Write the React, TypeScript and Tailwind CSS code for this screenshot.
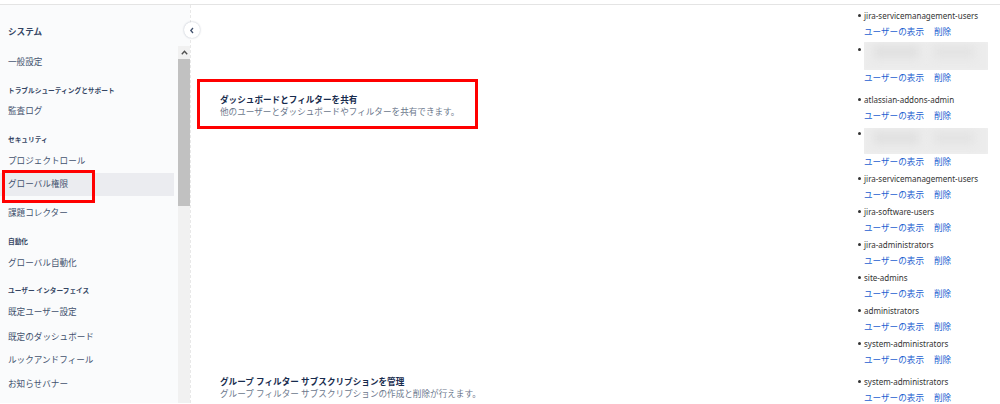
const font = "font-['Noto_Sans','Noto_Sans_CJK_JP',sans-serif]";

type NavRow = { label: string; kind: "title" | "header" | "item"; cls: string; selected?: boolean };

const nav: NavRow[] = [
  { label: "システム", kind: "title", cls: "mt-[15px] h-6" },
  { label: "一般設定", kind: "item", cls: "mt-[6px] h-6" },
  { label: "トラブルシューティングとサポート", kind: "header", cls: "mt-[8px] h-[18px]" },
  { label: "監査ログ", kind: "item", cls: "h-[22px]" },
  { label: "セキュリティ", kind: "header", cls: "mt-[9px] h-[18px]" },
  { label: "プロジェクトロール", kind: "item", cls: "h-6" },
  { label: "グローバル権限", kind: "item", cls: "h-[23px]", selected: true },
  { label: "課題コレクター", kind: "item", cls: "mt-[5px] h-6" },
  { label: "自動化", kind: "header", cls: "mt-[8px] h-[18px]" },
  { label: "グローバル自動化", kind: "item", cls: "h-6" },
  { label: "ユーザー インターフェイス", kind: "header", cls: "mt-[7px] h-[18px]" },
  { label: "既定ユーザー設定", kind: "item", cls: "h-[25px]" },
  { label: "既定のダッシュボード", kind: "item", cls: "h-6" },
  { label: "ルックアンドフィール", kind: "item", cls: "h-[23px]" },
  { label: "お知らせバナー", kind: "item", cls: "h-6" },
];

type Group = { name?: string; top?: string; gapAfter?: string };

const groups: Group[] = [
  { name: "jira-servicemanagement-users" },
  { top: "mt-[2px] h-[28px]", gapAfter: "mb-[5px]" },
  { name: "atlassian-addons-admin" },
  { top: "mt-[4px] h-[26px]" },
  { name: "jira-servicemanagement-users" },
  { name: "jira-software-users" },
  { name: "jira-administrators" },
  { name: "site-admins" },
  { name: "administrators" },
  { name: "system-administrators", gapAfter: "mb-[5px]" },
  { name: "system-administrators" },
];

function Links() {
  return (
    <div className="flex h-4 items-center gap-[10px] pl-[9px] text-[8.6px] text-[#1d5fd1]">
      <span>ユーザーの表示</span>
      <span>削除</span>
    </div>
  );
}

function Sidebar() {
  return (
    <div className="flex w-[190px] shrink-0 bg-[#fafbfc]">
      <div className="flex w-[178px] flex-col">
        {nav.map((r, i) => (
          <div
            key={i}
            className={`relative flex items-center pl-2 ${r.cls} ${
              r.selected ? "mr-[4px] bg-[#ebecf0]" : ""
            } ${
              r.kind === "title"
                ? "text-[8.6px] font-bold text-[#344563]"
                : r.kind === "header"
                ? "text-[6.7px] font-bold text-[#344563]"
                : "text-[8.6px] text-[#42526e]"
            }`}
          >
            {r.label}
            {r.selected && (
              <div className="absolute left-[2px] top-[-3px] h-[33px] w-[93px] border-[3px] border-[#ff0000]" />
            )}
          </div>
        ))}
      </div>
      <div className="flex w-[12px] flex-col pt-[41px]">
        <div className="flex h-[13px] items-center justify-center bg-[#f1f1f1]">
          <svg width="7" height="5" viewBox="0 0 7 5">
            <path d="M0.8 4.2 L3.5 1.3 L6.2 4.2" fill="none" stroke="#505050" strokeWidth="1.4" />
          </svg>
        </div>
        <div className="h-[147px] bg-[#c1c1c1]" />
        <div className="flex-1 bg-[#f1f1f1]" />
      </div>
    </div>
  );
}

export default function App() {
  return (
    <div className={`h-[404px] w-[1000px] overflow-hidden bg-white ${font}`}>
      <div className="h-[5px] border-b border-[#e4e4e4]" />
      <div className="relative flex h-[398px]">
        <Sidebar />
        <button className="absolute left-[184px] top-[17px] flex h-4 w-4 items-center justify-center rounded-full bg-white shadow-[0_0_2px_rgba(9,30,66,0.3)]">
          <svg width="6" height="7" viewBox="0 0 6 7">
            <path d="M4 1 L1.8 3.5 L4 6" fill="none" stroke="#42526e" strokeWidth="1.3" />
          </svg>
        </button>
        <main className="flex flex-1 border-l border-dashed border-[#e8e8e8]">
          <div className="flex flex-1 flex-col pt-[74px]">
            <div className="ml-[6px] w-[281px] border-[3px] border-[#ff0000] pb-[8px] pl-[20px] pt-[12px]">
              <div className="h-3 text-[8.6px] font-bold leading-3 text-[#172b4d]">
                ダッシュボードとフィルターを共有
              </div>
              <div className="h-3 text-[8.6px] leading-3 text-[#6b778c]">
                他のユーザーとダッシュボードやフィルターを共有できます。
              </div>
            </div>
            <div className="mt-auto pb-[3px] pl-[29px]">
              <div className="h-3 text-[8.6px] font-bold leading-3 text-[#172b4d]">
                グループ フィルター サブスクリプションを管理
              </div>
              <div className="h-3 text-[8.6px] leading-3 text-[#6b778c]">
                グループ フィルター サブスクリプションの作成と削除が行えます。
              </div>
            </div>
          </div>
          <div className="flex w-[145px] shrink-0 flex-col pt-[2px]">
            {groups.map((g, i) => (
              <div key={i} className={g.gapAfter ?? ""}>
                {g.name ? (
                  <div className="flex h-[17px] items-center text-[8px] text-[#333]">
                    <span className="mx-[3px] h-[3px] w-[3px] rounded-full bg-[#333]" />
                    {g.name}
                  </div>
                ) : (
                  <div className="flex h-[30px] items-start">
                    <span className="mx-[3px] mt-[8px] h-[3px] w-[3px] rounded-full bg-[#333]" />
                    <div className={`${g.top} relative w-[124px] overflow-hidden`}>
                      <div className="absolute inset-[-4px] bg-[#ececec] blur-[3px]" />
                      <div className="absolute left-[10px] top-[4px] h-[12px] w-[45px] bg-[#e0e0e0] blur-[4px]" />
                      <div className="absolute left-[70px] top-[4px] h-[12px] w-[40px] bg-[#e3e3e3] blur-[4px]" />
                    </div>
                  </div>
                )}
                <Links />
              </div>
            ))}
          </div>
        </main>
      </div>
    </div>
  );
}
